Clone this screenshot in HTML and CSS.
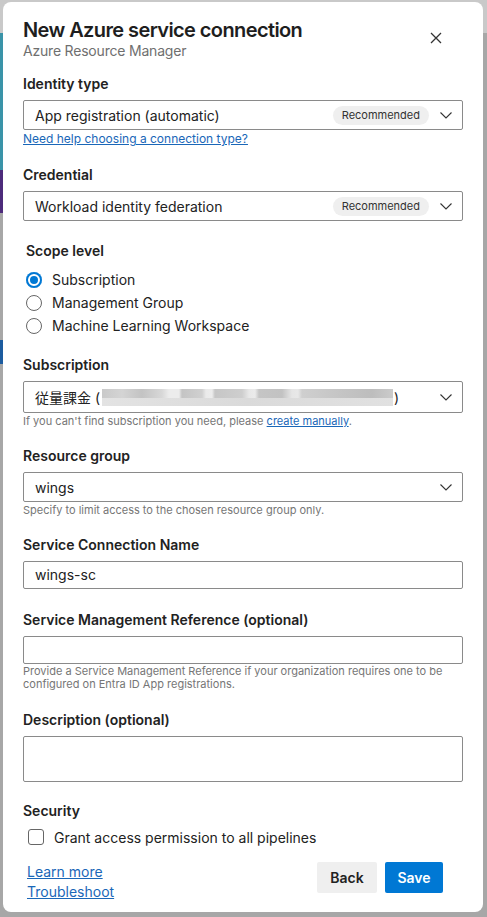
FILE: index.html
```html
<!DOCTYPE html>
<html lang="en">
<head>
    <meta charset="UTF-8">
    <meta name="viewport" content="width=device-width, initial-scale=1.0">
    <title>New Azure service connection</title>
    <link rel="stylesheet" href="styles.css">
</head>
<body>
    <div class="dialog">
        <header class="dialog-header">
            <div>
                <h1 class="title">New Azure service connection</h1>
                <div class="subtitle">Azure Resource Manager</div>
            </div>
            <button class="close" aria-label="Close">
                <svg width="12" height="12" viewBox="0 0 12 12"><path d="M1 1 L11 11 M11 1 L1 11" stroke="#333" stroke-width="1.3" fill="none"/></svg>
            </button>
        </header>

        <div class="dialog-body">
            <!-- Identity type -->
            <div class="field">
                <div class="field-label">Identity type</div>
                <div class="select">
                    <span class="select-text">App registration (automatic)</span>
                    <span class="badge">Recommended</span>
                    <svg class="chevron" width="12" height="7" viewBox="0 0 12 7"><path d="M0.5 0.5 L6 6 L11.5 0.5" stroke="#333" stroke-width="1.1" fill="none"/></svg>
                </div>
                <a href="#" class="help-link">Need help choosing a connection type?</a>
            </div>

            <!-- Credential -->
            <div class="field credential">
                <div class="field-label">Credential</div>
                <div class="select">
                    <span class="select-text">Workload identity federation</span>
                    <span class="badge">Recommended</span>
                    <svg class="chevron" width="12" height="7" viewBox="0 0 12 7"><path d="M0.5 0.5 L6 6 L11.5 0.5" stroke="#333" stroke-width="1.1" fill="none"/></svg>
                </div>
            </div>

            <!-- Scope level -->
            <div class="field scope">
                <div class="field-label">Scope level</div>
                <div class="radio-group">
                    <div class="radio-row"><span class="radio checked"></span>Subscription</div>
                    <div class="radio-row"><span class="radio"></span>Management Group</div>
                    <div class="radio-row"><span class="radio"></span>Machine Learning Workspace</div>
                </div>
            </div>

            <!-- Subscription -->
            <div class="field with-helper">
                <div class="field-label">Subscription</div>
                <div class="select select-tall">
                    <span class="select-text">従量課金 (<span class="blur"></span>)</span>
                    <svg class="chevron" width="12" height="7" viewBox="0 0 12 7"><path d="M0.5 0.5 L6 6 L11.5 0.5" stroke="#333" stroke-width="1.1" fill="none"/></svg>
                </div>
                <div class="helper">If you can't find subscription you need, please <a href="#">create manually</a>.</div>
            </div>

            <!-- Resource group -->
            <div class="field with-helper">
                <div class="field-label">Resource group</div>
                <div class="select">
                    <span class="select-text">wings</span>
                    <svg class="chevron" width="12" height="7" viewBox="0 0 12 7"><path d="M0.5 0.5 L6 6 L11.5 0.5" stroke="#333" stroke-width="1.1" fill="none"/></svg>
                </div>
                <div class="helper">Specify to limit access to the chosen resource group only.</div>
            </div>

            <!-- Service connection name -->
            <div class="field name-field">
                <div class="field-label">Service Connection Name</div>
                <div class="input">wings-sc</div>
            </div>

            <!-- Service management reference -->
            <div class="field">
                <div class="field-label">Service Management Reference (optional)</div>
                <div class="input"></div>
                <div class="helper helper-wrap">Provide a Service Management Reference if your organization requires one to be configured on Entra ID App registrations.</div>
            </div>

            <!-- Description -->
            <div class="field">
                <div class="field-label">Description (optional)</div>
                <div class="textarea"></div>
            </div>

            <!-- Security -->
            <div class="field security">
                <div class="field-label">Security</div>
                <div class="check-row"><span class="checkbox"></span>Grant access permission to all pipelines</div>
            </div>
        </div>

        <footer class="dialog-footer">
            <div class="footer-links">
                <a href="#">Learn more</a>
                <a href="#">Troubleshoot</a>
            </div>
            <div class="footer-buttons">
                <button class="btn btn-back">Back</button>
                <button class="btn btn-primary">Save</button>
            </div>
        </footer>
    </div>
</body>
</html>
```

FILE: styles.css
```css
/* Global styles */
body {
    margin: 0;
    padding: 2px 4px 5px 3px;
    font-family: Inter, "Noto Sans CJK JP", sans-serif;
    color: #222;
    background-color: #a7a7a7;
    /* bits of the page behind the overlay */
    background-image:
        linear-gradient(#c9c9c9, #c9c9c9),
        linear-gradient(to bottom, transparent 33px, #3a93a8 33px, #3a93a8 170px, #4d2b7b 170px, #4d2b7b 213px, transparent 213px, transparent 340px, #1d5c9f 340px, #1d5c9f 364px, transparent 364px),
        linear-gradient(#7a2b80, #7a2b80);
    background-size: 100% 33px, 3px 100%, 30px 3px;
    background-position: 0 0, 0 0, 453px 0;
    background-repeat: no-repeat;
}

.dialog {
    background-color: #fff;
    border-radius: 8px;
    width: 480px;
    height: 910px;
    padding: 16px 20px 0 20px;
    box-sizing: border-box;
    font-size: 14px;
}

/* Header styles */
.dialog-header {
    display: flex;
    justify-content: space-between;
    align-items: flex-start;
    margin-bottom: 14px;
}

.title {
    margin: 0;
    font-size: 20px;
    line-height: 24px;
    font-weight: 600;
    color: #1e1e1e;
    letter-spacing: -0.6px;
}

.subtitle {
    font-size: 14px;
    line-height: 18px;
    color: #6f6f6f;
    letter-spacing: -0.2px;
}

.close {
    border: none;
    background: none;
    padding: 0;
    margin: 14px 21px 0 0;
    width: 12px;
    height: 12px;
    display: flex;
}

/* Form fields */
.field {
    margin-bottom: 19px;
}

.field.with-helper {
    margin-bottom: 18px;
}

.field.name-field {
    margin-bottom: 21px;
}

.field-label {
    font-weight: 600;
    line-height: 20px;
    margin-bottom: 6px;
    color: #222;
}

.select,
.input,
.textarea {
    border: 1px solid #8a8a8a;
    border-radius: 2px;
    box-sizing: border-box;
}

.select {
    height: 30px;
    display: flex;
    align-items: center;
    padding: 0 10px 0 11px;
}

.select-tall {
    height: 32px;
}

.select-text {
    flex: 1;
    white-space: nowrap;
    display: flex;
    align-items: center;
}

.badge {
    background-color: #efefef;
    border-radius: 10px;
    font-size: 11px;
    line-height: 19px;
    padding: 0 9px;
    color: #333;
    margin-right: 11px;
}

.chevron {
    flex-shrink: 0;
}

.blur {
    display: inline-block;
    width: 291px;
    height: 17px;
    margin: 0 1px 0 2px;
    background-image:
        linear-gradient(to right, #c9c9c9 0, #d4d4d4 20px, #c3c3c3 40px, #d8d8d8 60px, #ececec 67px, #ececec 77px, #c4c4c4 80px, #d0d0d0 100px, #eaeaea 104px, #ececec 110px, #c6c6c6 113px, #cecece 140px, #e8e8e8 147px, #ebebeb 153px, #c5c5c5 157px, #c2c2c2 180px, #e6e6e6 190px, #e8e8e8 196px, #cfcfcf 200px, #c4c4c4 240px, #bdbdbd 270px, #cbcbcb 291px),
        linear-gradient(to right, #e3e3e3, #dadada 50%, #e1e1e1);
    background-size: 100% 9px, 100% 17px;
    background-repeat: no-repeat;
}

.help-link {
    display: block;
    margin-top: 2px;
    font-size: 12px;
    line-height: 14px;
    color: #1a67b8;
}

.helper {
    margin-top: 1px;
    font-size: 11px;
    line-height: 14px;
    color: #767676;
}

.helper a {
    color: #1a67b8;
}

.helper-wrap {
    line-height: 13px;
    margin-top: 1px;
}

.input {
    height: 28px;
    line-height: 26px;
    padding: 0 11px;
}

.textarea {
    height: 46px;
}

/* Scope radios */
.credential {
    margin-bottom: 20px;
}

.scope {
    margin-bottom: 18px;
}

.scope .field-label {
    padding-left: 3px;
    margin-bottom: 7px;
}

.radio-row {
    display: flex;
    align-items: center;
    height: 23px;
    padding-left: 3px;
    color: #222;
}

.radio {
    width: 16px;
    height: 16px;
    border: 1px solid #666;
    border-radius: 50%;
    box-sizing: border-box;
    margin-right: 10px;
    flex-shrink: 0;
}

.radio.checked {
    border: none;
    background-color: #0078d4;
    box-shadow: inset 0 0 0 2px #0078d4, inset 0 0 0 4px #fff;
}

/* Security */
.security {
    margin-bottom: 17px;
}

.security .field-label {
    margin-bottom: 8px;
}

.check-row {
    display: flex;
    align-items: center;
    height: 16px;
    padding-left: 5px;
}

.checkbox {
    width: 16px;
    height: 16px;
    border: 1px solid #666;
    border-radius: 3px;
    box-sizing: border-box;
    margin-right: 10px;
}

/* Footer styles */
.dialog-footer {
    display: flex;
    justify-content: space-between;
    align-items: flex-start;
    padding: 0 20px 0 4px;
}

.footer-links {
    display: flex;
    flex-direction: column;
}

.footer-links a {
    line-height: 19.5px;
    color: #1a67b8;
}

.footer-buttons {
    display: flex;
    gap: 8px;
}

.btn {
    height: 31px;
    padding: 0;
    border: none;
    border-radius: 2px;
    background-color: #efefef;
    color: #222;
    font-family: inherit;
    font-size: 14px;
    font-weight: 600;
}

.btn-back {
    width: 60px;
}

.btn-primary {
    width: 58px;
    background-color: #0078d4;
    color: #fff;
}
```
